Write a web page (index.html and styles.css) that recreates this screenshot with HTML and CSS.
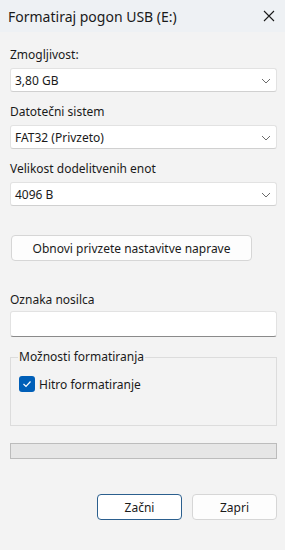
FILE: index.html
```html
<!DOCTYPE html>
<html lang="sl">
<head>
  <meta charset="UTF-8" />
  <meta name="viewport" content="width=device-width, initial-scale=1.0"/>
  <title>Formatiraj pogon USB (E:)</title>
  <link rel="stylesheet" href="styles.css">
</head>
<body>

  <div class="window">
    <div class="titlebar">
      <span class="title">Formatiraj pogon USB (E:)</span>
      <svg class="close" width="12" height="12" viewBox="0 0 12 12">
        <path d="M1 1 L11 11 M11 1 L1 11" stroke="#1a1a1a" stroke-width="1.1" fill="none"/>
      </svg>
    </div>

    <div class="content">
      <div class="field">
        <div class="label">Zmogljivost:</div>
        <div class="combo">
          <span>3,80 GB</span>
          <svg class="chevron" width="10" height="6" viewBox="0 0 10 6"><path d="M1 1 L5 5 L9 1" stroke="#6b6b6b" fill="none"/></svg>
        </div>
      </div>

      <div class="field">
        <div class="label">Datotečni sistem</div>
        <div class="combo">
          <span>FAT32 (Privzeto)</span>
          <svg class="chevron" width="10" height="6" viewBox="0 0 10 6"><path d="M1 1 L5 5 L9 1" stroke="#6b6b6b" fill="none"/></svg>
        </div>
      </div>

      <div class="field">
        <div class="label">Velikost dodelitvenih enot</div>
        <div class="combo">
          <span>4096 B</span>
          <svg class="chevron" width="10" height="6" viewBox="0 0 10 6"><path d="M1 1 L5 5 L9 1" stroke="#6b6b6b" fill="none"/></svg>
        </div>
      </div>

      <button class="btn restore">Obnovi privzete nastavitve naprave</button>

      <div class="label volume-label">Oznaka nosilca</div>
      <div class="text-input"></div>

      <fieldset class="group">
        <legend>Možnosti formatiranja</legend>
        <div class="check-row">
          <span class="checkbox">
            <svg width="10" height="8" viewBox="0 0 10 8"><path d="M1.5 4 L4 6.5 L8.5 1.5" stroke="#fff" stroke-width="1.2" fill="none"/></svg>
          </span>
          <span>Hitro formatiranje</span>
        </div>
      </fieldset>

      <div class="progress"></div>

      <div class="actions">
        <button class="btn action primary">Začni</button>
        <button class="btn action">Zapri</button>
      </div>
    </div>
  </div>

</body>
</html>
```

FILE: styles.css
```css
* { box-sizing: border-box; }
body {
  margin: 0;
  padding: 0;
  font-family: "Noto Sans", "Open Sans", sans-serif;
  font-size: 12px;
  color: #1a1a1a;
  background: #f3f3f3;
}
.window {
  width: 285px;
  height: 550px;
  background: #f3f3f3;
}
.titlebar {
  height: 32px;
  background: #eef1f4;
  display: flex;
  align-items: center;
  justify-content: space-between;
  padding: 0 10px 0 8px;
}
.title {
  font-size: 14px;
}
.close {
  margin-top: -1px;
}
.content {
  padding: 15px 8px 0 10px;
}
.label {
  height: 16px;
  line-height: 16px;
}
.field {
  margin-bottom: 12px;
}
.field .label {
  margin-bottom: 5px;
}
.combo {
  height: 24px;
  background: #fff;
  border: 1px solid #e2e2e2;
  border-bottom-color: #d0d0d0;
  border-radius: 3px;
  display: flex;
  align-items: center;
  justify-content: space-between;
  padding: 0 5px 0 4px;
}
.chevron {
  margin-top: 1px;
}
.btn {
  font-family: inherit;
  font-size: 12px;
  color: #1a1a1a;
  background: #fdfdfd;
  border: 1px solid #d6d6d6;
  border-radius: 4px;
  padding: 0;
  height: 26px;
}
.restore {
  display: block;
  width: 241px;
  margin: 29px 0 0 1px;
}
.volume-label {
  margin-top: 31px;
}
.text-input {
  height: 26px;
  margin-top: 3px;
  background: #fff;
  border: 1px solid #e2e2e2;
  border-bottom: 1px solid #8a8a8a;
  border-radius: 3px;
}
.group {
  margin: 12px 0 0;
  padding: 0 8px 33px 7px;
  border: 1px solid #dcdcdc;
}
.group legend {
  padding: 0 1px;
  line-height: 16px;
}
.check-row {
  display: flex;
  align-items: center;
  gap: 4px;
  height: 16px;
  margin-top: 11px;
  margin-left: 1px;
}
.checkbox {
  width: 16px;
  height: 16px;
  border-radius: 3px;
  background: #005fb8;
  display: flex;
  align-items: center;
  justify-content: center;
}
.progress {
  height: 16px;
  margin-top: 17px;
  background: #e6e6e6;
  border: 1px solid #bcbcbc;
}
.actions {
  display: flex;
  justify-content: flex-end;
  gap: 10px;
  margin-top: 35px;
}
.action {
  width: 85px;
}
.primary {
  border-color: #2b5f8e;
  background: #fff;
}
```
